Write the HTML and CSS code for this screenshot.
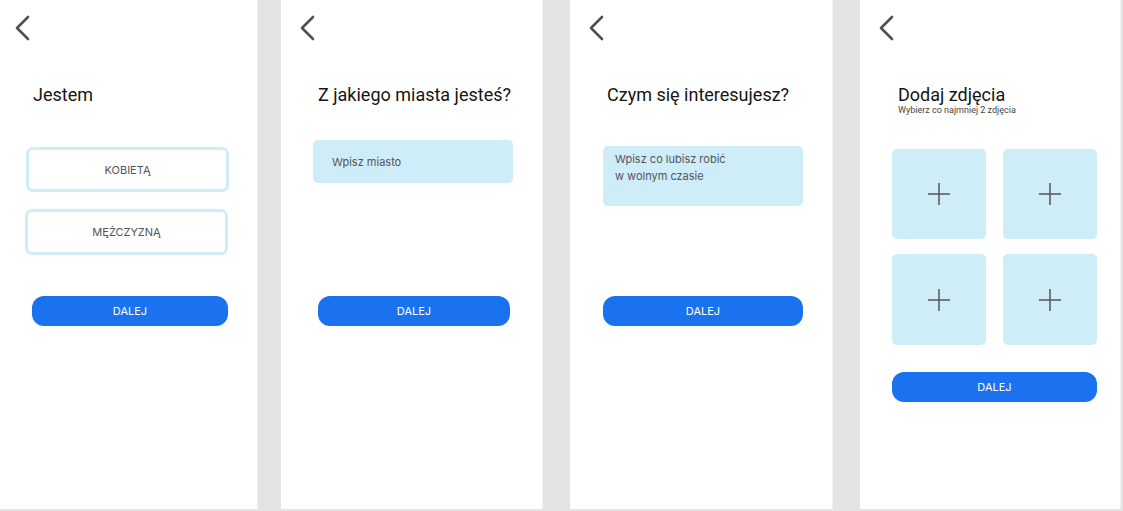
FILE: index.html
```html
<!DOCTYPE html>
<html lang="pl">
<head>
<meta charset="utf-8">
<title>Rejestracja</title>
<link rel="stylesheet" href="styles.css">
</head>
<body>
<div class="screens">
  <section class="panel p1">
    <div class="back b1"><svg width="16" height="26" viewBox="0 0 16 26"><polyline points="14,2 3,13 14,24" fill="none" stroke="#505050" stroke-width="2.6" stroke-linecap="round" stroke-linejoin="round"/></svg></div>
    <h1 class="title t1">Jestem</h1>
    <div class="choice c1">KOBIETĄ</div>
    <div class="choice c2">MĘŻCZYZNĄ</div>
    <button class="next n1">DALEJ</button>
  </section>

  <section class="panel p2">
    <div class="back"><svg width="16" height="26" viewBox="0 0 16 26"><polyline points="14,2 3,13 14,24" fill="none" stroke="#505050" stroke-width="2.6" stroke-linecap="round" stroke-linejoin="round"/></svg></div>
    <h1 class="title t2">Z jakiego miasta jesteś?</h1>
    <div class="field f1">Wpisz miasto</div>
    <button class="next n2">DALEJ</button>
  </section>

  <section class="panel p3">
    <div class="back"><svg width="16" height="26" viewBox="0 0 16 26"><polyline points="14,2 3,13 14,24" fill="none" stroke="#505050" stroke-width="2.6" stroke-linecap="round" stroke-linejoin="round"/></svg></div>
    <h1 class="title t3">Czym się interesujesz?</h1>
    <div class="field f2">Wpisz co lubisz robić<br>w wolnym czasie</div>
    <button class="next n3">DALEJ</button>
  </section>

  <section class="panel p4">
    <div class="back"><svg width="16" height="26" viewBox="0 0 16 26"><polyline points="14,2 3,13 14,24" fill="none" stroke="#505050" stroke-width="2.6" stroke-linecap="round" stroke-linejoin="round"/></svg></div>
    <h1 class="title t4">Dodaj zdjęcia</h1>
    <p class="sub">Wybierz co najmniej 2 zdjęcia</p>
    <div class="tiles">
      <div class="tile"><svg width="24" height="24" viewBox="0 0 24 24"><path d="M12 1v22M1 12h22" stroke="#555" stroke-width="1.5" fill="none"/></svg></div>
      <div class="tile"><svg width="24" height="24" viewBox="0 0 24 24"><path d="M12 1v22M1 12h22" stroke="#555" stroke-width="1.5" fill="none"/></svg></div>
      <div class="tile"><svg width="24" height="24" viewBox="0 0 24 24"><path d="M12 1v22M1 12h22" stroke="#555" stroke-width="1.5" fill="none"/></svg></div>
      <div class="tile"><svg width="24" height="24" viewBox="0 0 24 24"><path d="M12 1v22M1 12h22" stroke="#555" stroke-width="1.5" fill="none"/></svg></div>
    </div>
    <button class="next n4">DALEJ</button>
  </section>
</div>
</body>
</html>
```

FILE: styles.css
```css
* { box-sizing: border-box; }
html, body { margin: 0; padding: 0; }
body {
  background: #e4e4e4;
  font-family: Roboto, "Liberation Sans", sans-serif;
  width: 1123px;
  height: 511px;
  overflow: hidden;
}
.screens {
  display: flex;
  align-items: flex-start;
}
.panel {
  background: #ffffff;
  height: 509px;
  display: flex;
  flex-direction: column;
  align-items: flex-start;
  border-right: 1px solid #f0f0f0;
}
.p1 { width: 258px; }
.p2 { width: 262px; margin-left: 23px; }
.p3 { width: 263px; margin-left: 27px; }
.p4 { width: 261px; margin-left: 27px; }

.back {
  margin-top: 15px;
  margin-left: 18px;
  height: 26px;
  display: flex;
}
.back.b1 { margin-left: 14px; }

.title {
  margin: 43px 0 0 0;
  font-size: 18px;
  font-weight: 400;
  line-height: 21px;
  color: #151515;
}
.t1 { margin-left: 33px; }
.t2 { margin-left: 37px; }
.t3 { margin-left: 37px; }
.t4 { margin-left: 38px; }

.sub {
  margin: 0 0 0 38px;
  font-size: 9px;
  line-height: 11px;
  color: #444;
}

.choice, .next, .field {
  font-family: Inter, "Open Sans", sans-serif;
  font-size: 11px;
}
.choice {
  width: 203px;
  height: 45px;
  border: 3px solid #d2ebf8;
  border-radius: 7px;
  display: flex;
  align-items: center;
  justify-content: center;
  color: #555;
}
.c1 { margin: 42px 0 0 26px; }
.c2 { margin: 17px 0 0 25px; height: 46px; }

.next {
  border: 0;
  height: 30px;
  border-radius: 12px;
  background: #1b72ee;
  color: #ffffff;
  padding: 0;
  display: flex;
  align-items: center;
  justify-content: center;
}
.n1 { width: 196px; margin: 41px 0 0 32px; }
.n2 { width: 192px; margin: 113px 0 0 37px; }
.n3 { width: 200px; margin: 90px 0 0 33px; }
.n4 { width: 205px; margin: 27px 0 0 32px; }

.field {
  width: 200px;
  background: #cfecf9;
  border-radius: 5px;
  color: #555;
}
.f1 {
  height: 43px;
  margin: 35px 0 0 32px;
  display: flex;
  align-items: center;
  padding-left: 19px;
}
.f2 {
  height: 60px;
  margin: 41px 0 0 33px;
  padding: 5px 12px 0 12px;
  line-height: 17px;
}

.tiles {
  margin: 33px 0 0 32px;
  display: grid;
  grid-template-columns: 94px 94px;
  grid-template-rows: 90px 91px;
  column-gap: 17px;
  row-gap: 15px;
}
.tile {
  background: #cfecf9;
  border-radius: 5px;
  display: flex;
  align-items: center;
  justify-content: center;
}
```
